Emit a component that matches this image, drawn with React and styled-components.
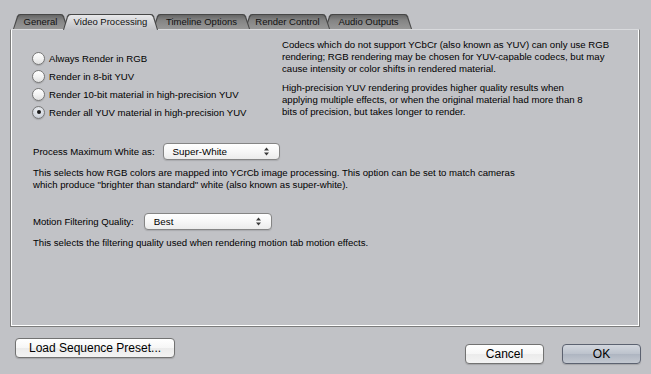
import React from "react";
import styled, { createGlobalStyle } from "styled-components";

const Global = createGlobalStyle`
  html, body { margin: 0; padding: 0; }
  body {
    background: #c1c2c6;
    font-family: "Liberation Sans", Arial, sans-serif;
    color: #000;
  }
`;

const Window = styled.div`
  width: 651px;
  height: 374px;
  display: flex;
  flex-direction: column;
  background: #c1c2c6;
  overflow: hidden;
`;

const TabBar = styled.div`
  position: relative;
  z-index: 2;
  display: flex;
  align-items: flex-end;
  height: 15px;
  padding: 14px 0 0 13px;
`;

const shape = (w, h, s) =>
  `path('M0 ${h} L${s - 1} 2.2 Q${s - 0.2} 0 ${s + 2} 0 L${w - s - 2} 0 Q${w - s + 0.2} 0 ${w - s + 1} 2.2 L${w} ${h} Z')`;

const Tab = styled.div`
  position: relative;
  box-sizing: border-box;
  flex: none;
  width: ${(p) => p.$w}px;
  height: ${(p) => (p.$active ? 16 : 15)}px;
  margin-left: ${(p) => (p.$first ? 0 : -5)}px;
  margin-bottom: ${(p) => (p.$active ? -1 : 0)}px;
  padding-bottom: ${(p) => (p.$active ? 1 : 0)}px;
  z-index: ${(p) => p.$z};
  display: flex;
  align-items: center;
  justify-content: center;
  font-size: 9.5px;
  color: #111;
  background: #474747;
  clip-path: ${(p) => shape(p.$w, p.$active ? 16 : 15, 5)};
  &::before {
    content: "";
    position: absolute;
    top: 1px;
    left: 1px;
    right: 1px;
    bottom: 0;
    z-index: -1;
    clip-path: ${(p) => shape(p.$w - 2, p.$active ? 15 : 14, 5)};
    background: ${(p) =>
      p.$active
        ? "linear-gradient(#e8e8ea, #d1d2d5 55%, #c1c2c6)"
        : "linear-gradient(#666666, #858585 40%, #979797)"};
  }
`;

const Panel = styled.div`
  position: relative;
  z-index: 1;
  box-sizing: border-box;
  height: 298px;
  margin: 0 11px 0 10px;
  border-top: 1px solid #d9dadd;
  border-left: 1px solid #7c7c7c;
  border-right: 1px solid #7c7c7c;
  border-bottom: 1px solid #7c7c7c;
  box-shadow: inset 1px 0 #fff, inset -1px 0 #fff, inset 0 -1px #fff;
  padding: 9px 0 0 21px;
  font-size: 9.6px;
`;

const TopSection = styled.div`
  display: flex;
`;

const RadioGroup = styled.div`
  width: 250px;
  flex: none;
  padding-top: 10px;
  display: flex;
  flex-direction: column;
`;

const RadioRow = styled.label`
  display: flex;
  align-items: center;
  gap: 4px;
  height: 18px;
  white-space: nowrap;
`;

const RadioCircle = styled.span`
  box-sizing: border-box;
  width: 13px;
  height: 13px;
  border-radius: 50%;
  border: 1px solid #777;
  display: flex;
  align-items: center;
  justify-content: center;
  background: ${(p) =>
    p.$checked
      ? "radial-gradient(circle at 50% 35%, #f1f3f6 0%, #d3d7de 60%, #b3b9c4 100%)"
      : "linear-gradient(#ffffff, #f3f3f3 50%, #e0e0e0)"};
  box-shadow: 0 1px 1px rgba(0, 0, 0, 0.14);
`;

const RadioDot = styled.span`
  width: 4px;
  height: 4px;
  border-radius: 50%;
  background: #1a1a1a;
`;

const Info = styled.div`
  display: flex;
  flex-direction: column;
  gap: 7px;
`;

const Para = styled.p`
  margin: 0;
  line-height: 12px;
  white-space: nowrap;
`;

const FieldRow = styled.div`
  display: flex;
  align-items: center;
  gap: ${(p) => p.$gap}px;
  height: 17px;
  margin-top: ${(p) => p.$top}px;
  padding-left: 1px;
`;

const Label = styled.span`
  white-space: nowrap;
`;

const Select = styled.div`
  box-sizing: border-box;
  width: ${(p) => p.$w}px;
  height: 17px;
  display: flex;
  align-items: center;
  justify-content: space-between;
  padding: 0 10px 0 9px;
  border: 1px solid #858585;
  border-radius: 4px;
  background: linear-gradient(#ffffff, #f7f7f7 50%, #ececec);
  box-shadow: 0 1px 1px rgba(0, 0, 0, 0.12);
  font-size: 9.8px;
`;

const Desc = styled.p`
  margin: 7px 0 0 1px;
  line-height: 12px;
  white-space: nowrap;
`;

const Footer = styled.div`
  flex: 1;
  display: flex;
  justify-content: space-between;
  padding: 11px 10px 0 15px;
`;

const ButtonGroup = styled.div`
  display: flex;
  gap: 18px;
  margin-top: 6px;
`;

const Button = styled.button`
  box-sizing: border-box;
  width: ${(p) => p.$w}px;
  height: 20px;
  padding: 0;
  border: 1px solid ${(p) => (p.$default ? "#5c6270" : "#727272")};
  border-radius: 4px;
  font-family: "Liberation Sans", Arial, sans-serif;
  font-size: 12px;
  color: #000;
  background: ${(p) =>
    p.$default
      ? "linear-gradient(#d3d7de, #bcc2cc 50%, #aeb5c1 51%, #c3c8d0)"
      : "linear-gradient(#ffffff, #f6f6f6 50%, #ebebeb 51%, #f3f3f3)"};
  box-shadow: 0 1px 1px rgba(0, 0, 0, 0.15);
`;

const Arrows = () => (
  <svg width="5" height="9" viewBox="0 0 5 9">
    <path d="M2.5 0.5 L5 3.5 L0 3.5 Z" fill="#3a3a3a" />
    <path d="M2.5 8.5 L5 5.5 L0 5.5 Z" fill="#3a3a3a" />
  </svg>
);

const tabs = [
  { label: "General", w: 55, z: 5 },
  { label: "Video Processing", w: 95, z: 10, active: true },
  { label: "Timeline Options", w: 97, z: 4 },
  { label: "Render Control", w: 85, z: 3 },
  { label: "Audio Outputs", w: 87, z: 2 },
];

const radios = [
  "Always Render in RGB",
  "Render in 8-bit YUV",
  "Render 10-bit material in high-precision YUV",
  "Render all YUV material in high-precision YUV",
];

export default function App() {
  return (
    <Window>
      <Global />
      <TabBar>
        {tabs.map((t, i) => (
          <Tab key={t.label} $w={t.w} $z={t.z} $active={t.active} $first={i === 0}>
            {t.label}
          </Tab>
        ))}
      </TabBar>
      <Panel>
        <TopSection>
          <RadioGroup>
            {radios.map((r, i) => (
              <RadioRow key={r}>
                <RadioCircle $checked={i === 3}>{i === 3 && <RadioDot />}</RadioCircle>
                {r}
              </RadioRow>
            ))}
          </RadioGroup>
          <Info>
            <Para>
              Codecs which do not support YCbCr (also known as YUV) can only use RGB
              <br />
              rendering; RGB rendering may be chosen for YUV-capable codecs, but may
              <br />
              cause intensity or color shifts in rendered material.
            </Para>
            <Para>
              High-precision YUV rendering provides higher quality results when
              <br />
              applying multiple effects, or when the original material had more than 8
              <br />
              bits of precision, but takes longer to render.
            </Para>
          </Info>
        </TopSection>

        <FieldRow $top={22} $gap={8}>
          <Label>Process Maximum White as:</Label>
          <Select $w={117}>
            <span>Super-White</span>
            <Arrows />
          </Select>
        </FieldRow>
        <Desc>
          This selects how RGB colors are mapped into YCrCb image processing. This option can be set to match cameras
          <br />
          which produce "brighter than standard" white (also known as super-white).
        </Desc>

        <FieldRow $top={22} $gap={10}>
          <Label>Motion Filtering Quality:</Label>
          <Select $w={128}>
            <span>Best</span>
            <Arrows />
          </Select>
        </FieldRow>
        <Desc>This selects the filtering quality used when rendering motion tab motion effects.</Desc>
      </Panel>
      <Footer>
        <Button $w={160}>Load Sequence Preset...</Button>
        <ButtonGroup>
          <Button $w={79}>Cancel</Button>
          <Button $w={79} $default>
            OK
          </Button>
        </ButtonGroup>
      </Footer>
    </Window>
  );
}
